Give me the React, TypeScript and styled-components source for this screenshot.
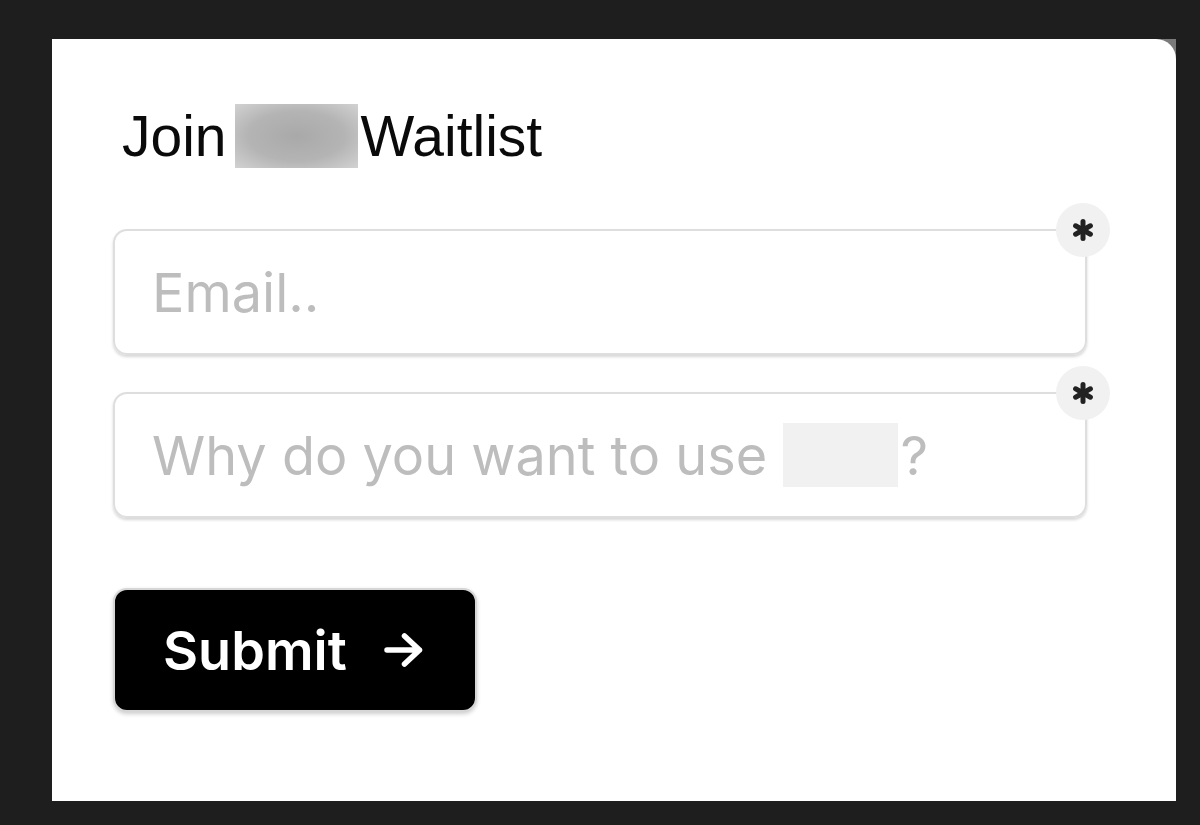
import React from 'react'
import styled, { createGlobalStyle } from 'styled-components'

const GlobalStyle = createGlobalStyle`
  html, body {
    margin: 0;
    padding: 0;
    background: #1e1e1e;
  }
  body {
    font-family: Inter, "Noto Sans", sans-serif;
  }
`

const PageStyled = styled.div`
  width: 1200px;
  height: 825px;
  padding: 39px 0 0 52px;
  box-sizing: border-box;
`

const CardFrameStyled = styled.div`
  position: relative;
  width: 1124px;
  height: 762px;

  &::before {
    content: '';
    position: absolute;
    top: 0;
    right: 0;
    width: 24px;
    height: 24px;
    background: #7a7a7a;
  }
`

const CardStyled = styled.div`
  position: relative;
  height: 100%;
  box-sizing: border-box;
  background: #ffffff;
  border-top-right-radius: 20px;
  padding: 65px 0 0 61px;
  display: flex;
  flex-direction: column;
  align-items: flex-start;
`

const TitleStyled = styled.h1`
  margin: 0 0 61px 9px;
  display: flex;
  align-items: center;
  height: 64px;
  font-family: "Liberation Sans", Arial, sans-serif;
  font-weight: 400;
  font-size: 57px;
  line-height: 64px;
  color: #0a0a0a;
`

const BlurStyled = styled.span<{ $tone: 'dark' | 'light'; $width: number }>`
  display: inline-block;
  width: ${props => props.$width}px;
  height: 64px;
  background: ${props =>
    props.$tone === 'dark'
      ? 'radial-gradient(ellipse at center, #a9a9a9 0%, #b4b4b4 55%, #d2d2d2 100%)'
      : '#f1f1f1'};
`

const TitleBlurStyled = styled(BlurStyled)`
  margin: 0 3px 0 8px;
`

const FieldStyled = styled.div<{ $last?: boolean }>`
  position: relative;
  width: 974px;
  height: 126px;
  box-sizing: border-box;
  border: 2px solid #dedede;
  border-radius: 14px;
  box-shadow: 0 2px 3px rgba(0, 0, 0, 0.16);
  margin-bottom: ${props => (props.$last ? 70 : 37)}px;
  padding-left: 37px;
  display: flex;
  align-items: center;
`

const PlaceholderStyled = styled.span`
  display: flex;
  align-items: center;
  font-family: Inter, "Noto Sans", sans-serif;
  font-size: 54px;
  color: #bdbdbd;
  white-space: pre;
`

const InlineBlurStyled = styled(BlurStyled)`
  margin: 0 2px 0 1px;
`

const BadgeStyled = styled.span`
  position: absolute;
  top: -28px;
  right: -25px;
  width: 54px;
  height: 54px;
  border-radius: 50%;
  background: #f1f1f1;
  display: flex;
  align-items: center;
  justify-content: center;
`

const ButtonStyled = styled.button`
  width: 364px;
  height: 124px;
  box-sizing: border-box;
  background: #000000;
  border: 2px solid #d6d6d6;
  border-radius: 14px;
  box-shadow: 0 2px 4px rgba(0, 0, 0, 0.2);
  padding: 0 0 0 48px;
  display: flex;
  align-items: center;
  gap: 37px;
  font-family: Inter, "Noto Sans", sans-serif;
  font-weight: 600;
  font-size: 54px;
  color: #ffffff;
  cursor: pointer;
`

function Asterisk() {
  return (
    <svg width="22" height="22" viewBox="0 0 22 22">
      <g stroke="#222" strokeWidth="5" strokeLinecap="round">
        <line x1="11" y1="2.5" x2="11" y2="19.5" />
        <line x1="3.6" y1="6.75" x2="18.4" y2="15.25" />
        <line x1="3.6" y1="15.25" x2="18.4" y2="6.75" />
      </g>
    </svg>
  )
}

function Arrow() {
  return (
    <svg width="39" height="34" viewBox="0 0 39 34">
      <path
        d="M3 17 H35.5 M20.5 3 L35.5 17 L20.5 31"
        fill="none"
        stroke="#fff"
        strokeWidth="5.5"
        strokeLinecap="round"
        strokeLinejoin="round"
      />
    </svg>
  )
}

function App() {
  return (
    <>
      <GlobalStyle />
      <PageStyled>
        <CardFrameStyled>
          <CardStyled>
            <TitleStyled>
              Join
              <TitleBlurStyled $tone="dark" $width={123} />
              Waitlist
            </TitleStyled>

            <FieldStyled>
              <PlaceholderStyled>Email..</PlaceholderStyled>
              <BadgeStyled>
                <Asterisk />
              </BadgeStyled>
            </FieldStyled>

            <FieldStyled $last>
              <PlaceholderStyled>
                {'Why do you want to use '}
                <InlineBlurStyled $tone="light" $width={115} />?
              </PlaceholderStyled>
              <BadgeStyled>
                <Asterisk />
              </BadgeStyled>
            </FieldStyled>

            <ButtonStyled type="button">
              Submit
              <Arrow />
            </ButtonStyled>
          </CardStyled>
        </CardFrameStyled>
      </PageStyled>
    </>
  )
}

export default App
